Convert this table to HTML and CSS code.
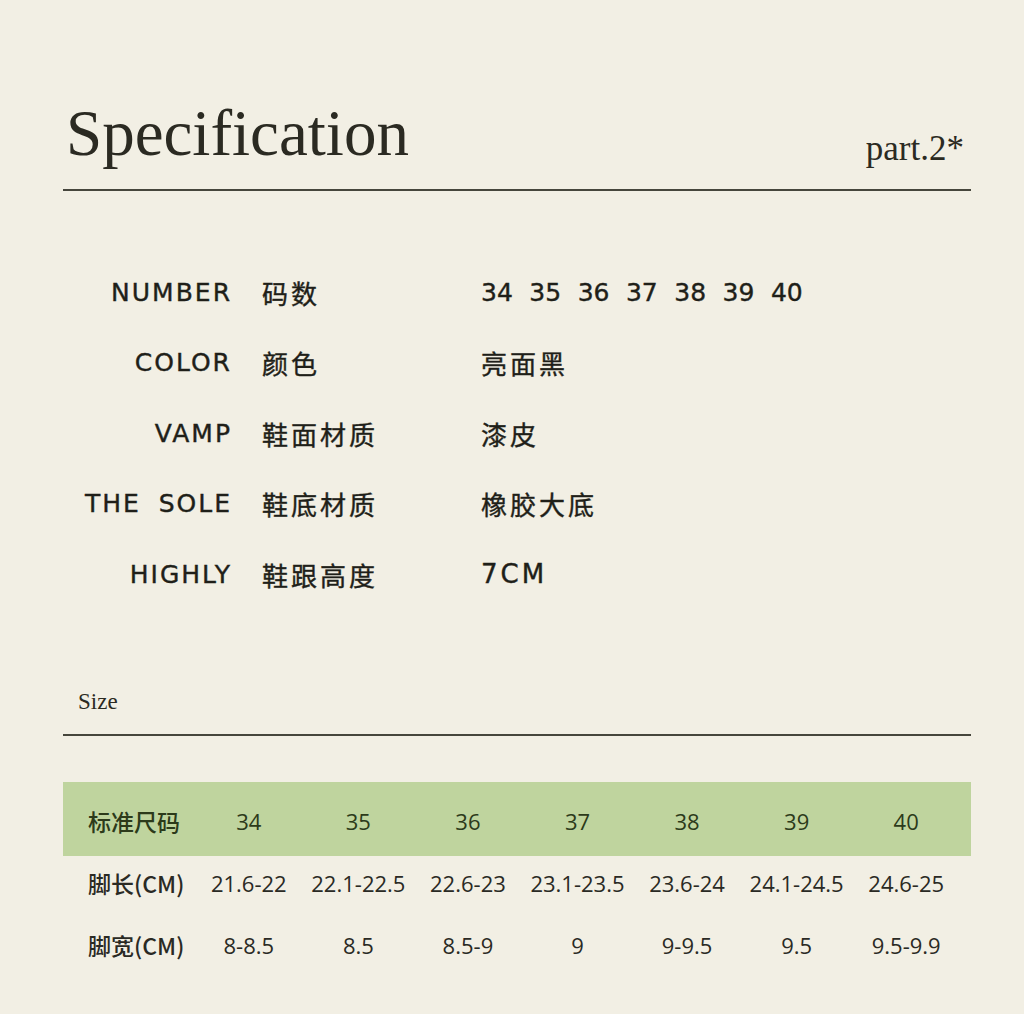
FILE: index.html
```html
<!DOCTYPE html>
<html lang="zh-CN">
  <head>
    <meta charset="UTF-8" />
    <meta name="viewport" content="width=device-width, initial-scale=1.0" />
    <title>Specification</title>
    <link rel="stylesheet" href="styles.css">
  </head>
  <body>
    <div class="page">
      <div class="header">
        <h1 class="title">Specification</h1>
        <span class="part">part.2*</span>
      </div>

      <div class="spec">
        <div class="spec-row">
          <span class="en">NUMBER</span>
          <span class="cn">码数</span>
          <span class="val sizes">
            <span>34</span><span>35</span><span>36</span><span>37</span><span>38</span><span>39</span><span>40</span>
          </span>
        </div>
        <div class="spec-row">
          <span class="en">COLOR</span>
          <span class="cn">颜色</span>
          <span class="val">亮面黑</span>
        </div>
        <div class="spec-row">
          <span class="en">VAMP</span>
          <span class="cn">鞋面材质</span>
          <span class="val">漆皮</span>
        </div>
        <div class="spec-row">
          <span class="en">THE SOLE</span>
          <span class="cn">鞋底材质</span>
          <span class="val">橡胶大底</span>
        </div>
        <div class="spec-row">
          <span class="en">HIGHLY</span>
          <span class="cn">鞋跟高度</span>
          <span class="val">7CM</span>
        </div>
      </div>

      <div class="size-head">Size</div>

      <div class="size-table">
        <div class="trow thead">
          <span class="label">标准尺码</span>
          <span>34</span><span>35</span><span>36</span><span>37</span><span>38</span><span>39</span><span>40</span>
        </div>
        <div class="trow">
          <span class="label">脚长(CM)</span>
          <span>21.6-22</span><span>22.1-22.5</span><span>22.6-23</span><span>23.1-23.5</span><span>23.6-24</span><span>24.1-24.5</span><span>24.6-25</span>
        </div>
        <div class="trow">
          <span class="label">脚宽(CM)</span>
          <span>8-8.5</span><span>8.5</span><span>8.5-9</span><span>9</span><span>9-9.5</span><span>9.5</span><span>9.5-9.9</span>
        </div>
      </div>
    </div>
  </body>
</html>
```

FILE: styles.css
```css
body,
html {
  margin: 0;
  padding: 0;
  background-color: #f2efe4;
  color: #26261f;
}

.page {
  padding: 0 53px 0 63px;
}

.header {
  display: flex;
  justify-content: space-between;
  align-items: flex-end;
  padding-top: 101px;
  padding-bottom: 23px;
  border-bottom: 2px solid #46463c;
}

.title {
  margin: 0 0 0 3px;
  font-family: "Liberation Serif", serif;
  font-weight: normal;
  font-size: 65px;
  line-height: 1;
  color: #2b2a22;
}

.part {
  font-family: "Liberation Serif", serif;
  font-size: 35px;
  line-height: 1;
  color: #2b2a22;
  margin-right: 7px;
}

.spec {
  margin-top: 66px;
}

.spec-row {
  display: grid;
  grid-template-columns: 167px 187px 1fr;
  column-gap: 32px;
  align-items: center;
  height: 70.5px;
  font-size: 25px;
  color: #1f1f19;
}

.en {
  font-family: "DejaVu Sans", sans-serif;
  text-align: right;
  letter-spacing: 2px;
  word-spacing: 8px;
  margin-right: -2px;
  -webkit-text-stroke: 0.4px #1f1f19;
}

.cn,
.val {
  font-family: "DejaVu Sans", "Noto Sans CJK SC", sans-serif;
  font-size: 26px;
  letter-spacing: 3px;
  -webkit-text-stroke: 0.4px #1f1f19;
}

.sizes {
  display: flex;
  gap: 16.5px;
  font-size: 25px;
  letter-spacing: 0;
}

.size-head {
  margin-top: 80px;
  padding: 0 0 21px 15px;
  font-family: "Liberation Serif", serif;
  font-size: 23px;
  line-height: 1;
  color: #2b2a22;
  border-bottom: 2px solid #46463c;
}

.size-table {
  margin-top: 46px;
  font-family: "Open Sans", "Noto Sans CJK SC", sans-serif;
  font-size: 22px;
  color: #2a2a24;
}

.trow {
  display: grid;
  grid-template-columns: 131px repeat(7, 1fr);
  align-items: center;
  height: 55px;
  padding-bottom: 7px;
  padding-right: 10px;
}

.trow span {
  text-align: center;
  white-space: nowrap;
}

.trow .label {
  text-align: left;
  padding-left: 25px;
  font-family: "Noto Sans CJK SC", sans-serif;
  font-size: 23px;
  font-weight: 500;
}

.thead {
  height: 70px;
  padding-top: 4px;
  padding-bottom: 0;
  background-color: #bfd49e;
  color: #2c3a1a;
}
```
